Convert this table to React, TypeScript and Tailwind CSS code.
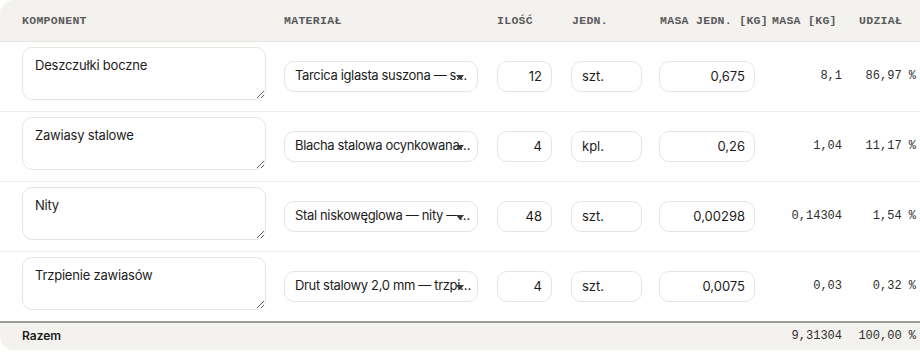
const ROWS = [
  {
    name: "Deszczułki boczne",
    material: "Tarcica iglasta suszona — sosna klasy C24",
    qty: "12",
    unit: "szt.",
    unitMass: "0,675",
    mass: "8,1",
    share: "86,97 %",
  },
  {
    name: "Zawiasy stalowe",
    material: "Blacha stalowa ocynkowana 1,5 mm",
    qty: "4",
    unit: "kpl.",
    unitMass: "0,26",
    mass: "1,04",
    share: "11,17 %",
  },
  {
    name: "Nity",
    material: "Stal niskowęglowa — nity — ø 4 mm",
    qty: "48",
    unit: "szt.",
    unitMass: "0,00298",
    mass: "0,14304",
    share: "1,54 %",
  },
  {
    name: "Trzpienie zawiasów",
    material: "Drut stalowy 2,0 mm — trzpienie",
    qty: "4",
    unit: "szt.",
    unitMass: "0,0075",
    mass: "0,03",
    share: "0,32 %",
  },
];

const sans = "font-['Inter','Noto_Sans',sans-serif]";
const mono = "font-['Liberation_Mono','DejaVu_Sans_Mono',monospace]";
const field =
  "h-[31px] w-full rounded-[10px] border border-[#e6e5e2] bg-white text-[13px] text-[#1c1c1c] outline-none";

function Head({ label, className }: { label: string; className: string }) {
  return (
    <th
      className={`h-[41px] border-b border-[#e6e4df] text-left align-middle text-[11.5px] font-bold uppercase tracking-[0.3px] text-[#5a5a5a] ${mono} ${className}`}
    >
      {label}
    </th>
  );
}

function MaterialSelect({ value }: { value: string }) {
  return (
    <div
      className={`relative flex items-center pl-[10px] pr-[5px] tracking-[-0.35px] ${field}`}
    >
      <span className="truncate">{value}</span>
      {/* arrow sits over the ellipsis, as in the app */}
      <svg
        className="absolute right-[13px] top-[13px]"
        width="8"
        height="5"
        viewBox="0 0 8 5"
      >
        <path d="M0 0h8L4 5z" fill="#3a3a3a" />
      </svg>
    </div>
  );
}

export default function App() {
  return (
    <div className="h-[356px] w-[920px] overflow-hidden bg-white">
      <div className="w-[926px] overflow-hidden rounded-l-[14px] bg-white">
        <table className={`w-[926px] table-fixed border-collapse ${sans}`}>
          <colgroup>
            <col className="w-[276px]" />
            <col className="w-[211px]" />
            <col className="w-[75px]" />
            <col className="w-[89px]" />
            <col className="w-[112px]" />
            <col className="w-[89px]" />
            <col className="w-[74px]" />
          </colgroup>
          <thead className="bg-[#f3f2ef]">
            <tr>
              <Head label="Komponent" className="pl-[22px]" />
              <Head label="Materiał" className="pl-[8px]" />
              <Head label="Ilość" className="pl-[10px]" />
              <Head label="Jedn." className="pl-[10px]" />
              <Head label="Masa jedn. [kg]" className="pl-[9px] whitespace-nowrap" />
              <Head label="Masa [kg]" className="pl-[9px] whitespace-nowrap" />
              <Head label="Udział" className="pl-[7px]" />
            </tr>
          </thead>
          <tbody>
            {ROWS.map((r, i) => (
              <tr
                key={r.name}
                className={i < ROWS.length - 1 ? "border-b border-[#efeeeb]" : ""}
              >
                <td className="pl-[22px] pr-[10px] pt-[5px] pb-[11px] align-top">
                  <textarea
                    defaultValue={r.name}
                    className="block h-[53px] w-full rounded-[10px] border border-[#e6e5e2] bg-white px-[12px] pt-[8px] text-[13px] leading-[18px] tracking-[-0.2px] text-[#1c1c1c] outline-none"
                  />
                </td>
                <td className="pl-[8px] pr-[9px] align-middle">
                  <MaterialSelect value={r.material} />
                </td>
                <td className="px-[10px] align-middle">
                  <input
                    defaultValue={r.qty}
                    className={`${field} px-[9px] text-right`}
                  />
                </td>
                <td className="pl-[9px] pr-[9px] align-middle">
                  <input defaultValue={r.unit} className={`${field} px-[10px]`} />
                </td>
                <td className="px-[8px] align-middle">
                  <input
                    defaultValue={r.unitMass}
                    className={`${field} px-[9px] text-right`}
                  />
                </td>
                <td
                  className={`pr-[10px] text-right align-middle text-[12px] text-[#2e2e2e] ${mono}`}
                >
                  {r.mass}
                </td>
                <td
                  className={`pr-[10px] text-right align-middle text-[12px] text-[#2e2e2e] ${mono}`}
                >
                  {r.share}
                </td>
              </tr>
            ))}
          </tbody>
          <tfoot className="bg-[#f3f2ef]">
            <tr className="border-t-2 border-[#9b9b9b]">
              <td className="h-[28px] pl-[22px] text-[12px] font-semibold text-[#1c1c1c]">
                Razem
              </td>
              <td />
              <td />
              <td />
              <td />
              <td
                className={`pr-[10px] text-right text-[12px] text-[#2e2e2e] ${mono}`}
              >
                9,31304
              </td>
              <td
                className={`pr-[10px] text-right text-[12px] text-[#2e2e2e] ${mono}`}
              >
                100,00 %
              </td>
            </tr>
          </tfoot>
        </table>
      </div>
    </div>
  );
}
